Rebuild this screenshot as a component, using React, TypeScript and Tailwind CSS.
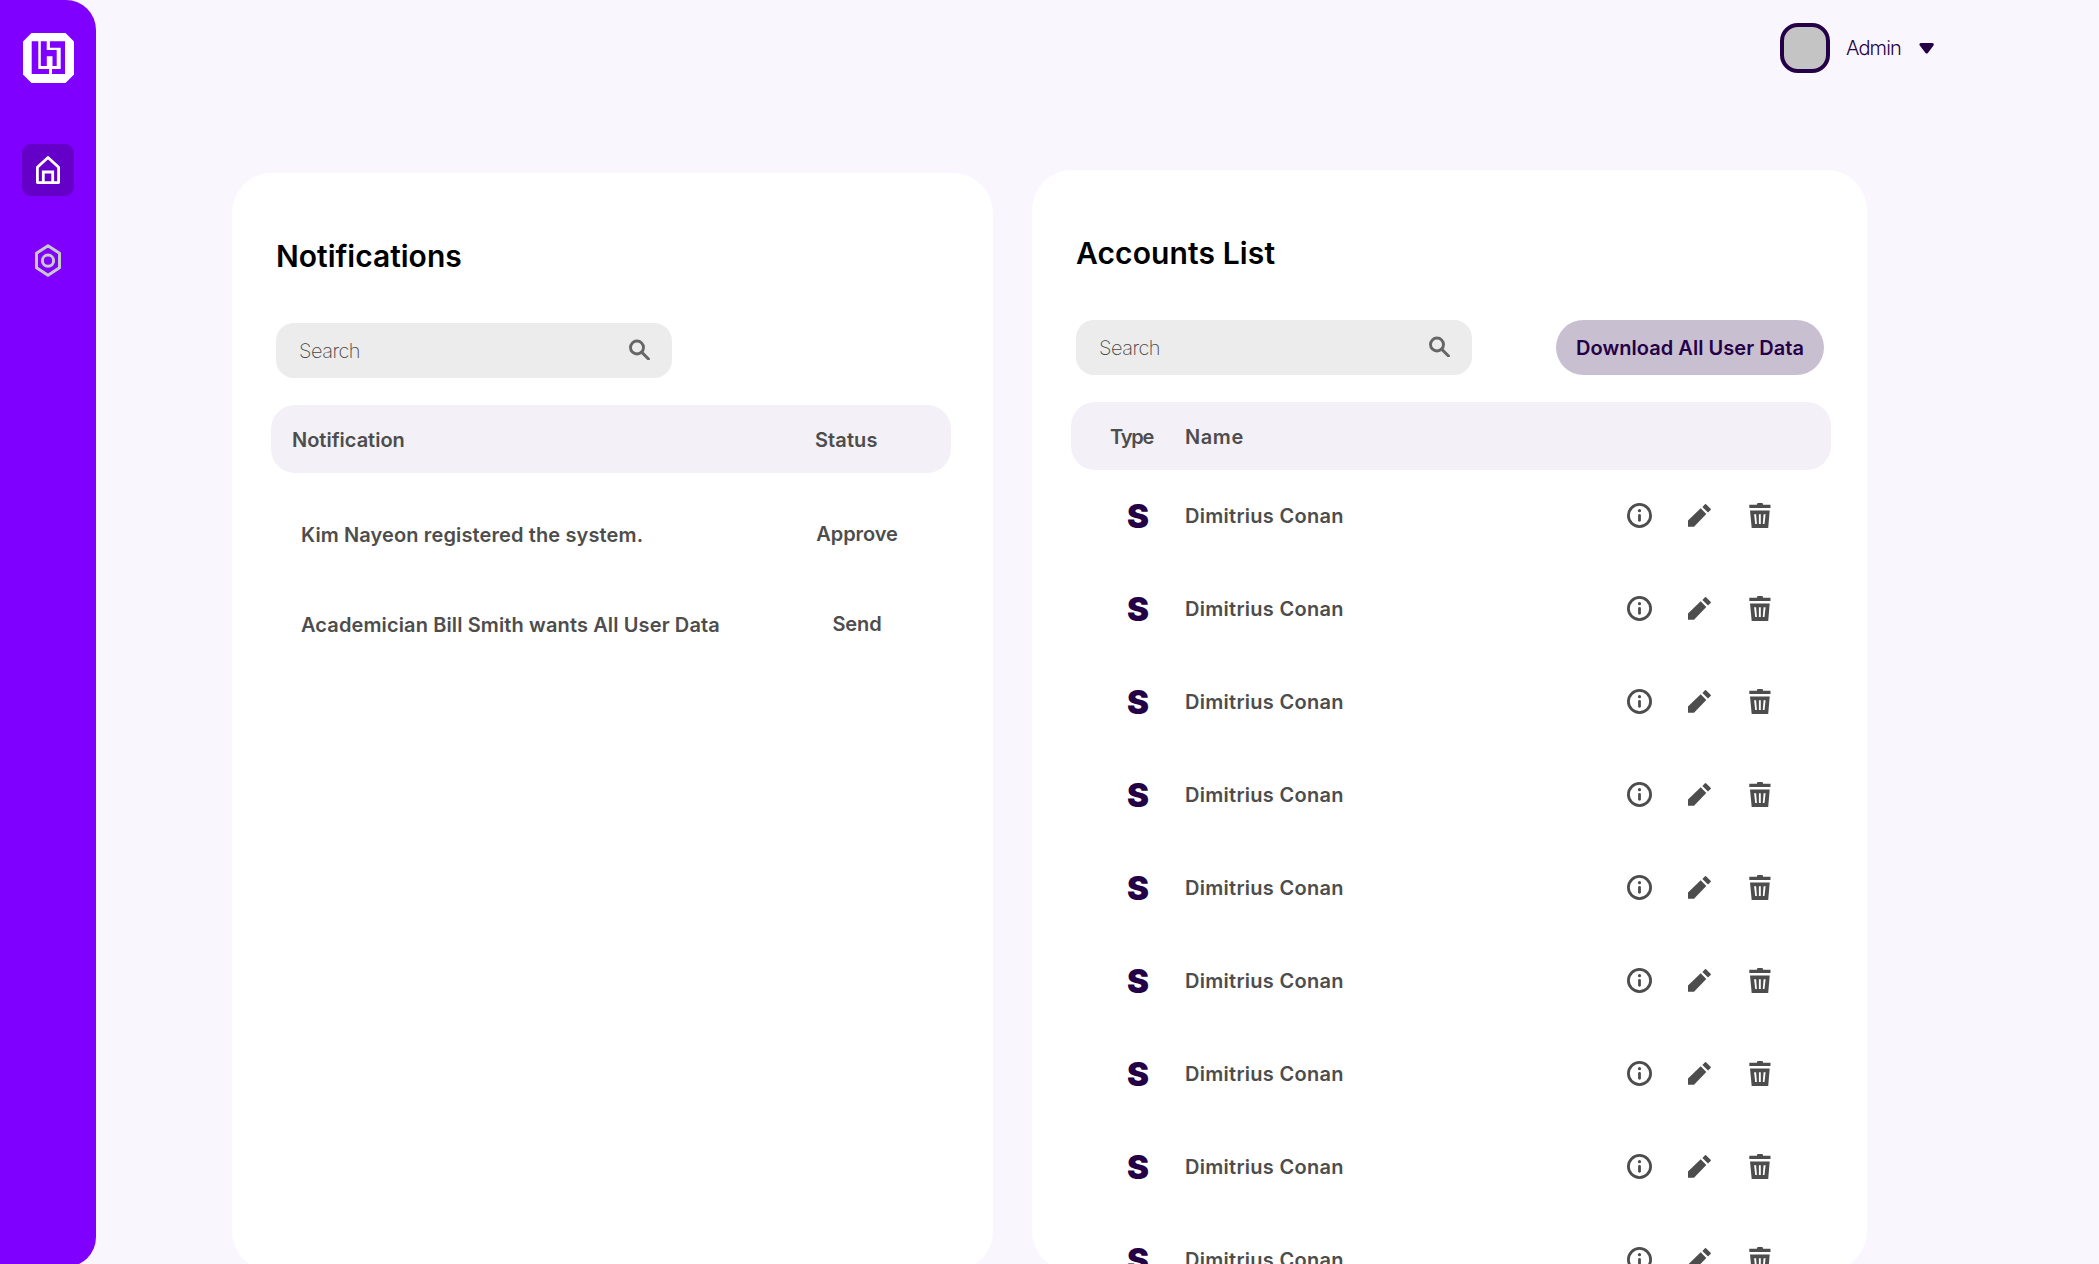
import React from 'react';

const notifications = [
  { text: 'Kim Nayeon registered the system.', action: 'Approve' },
  { text: 'Academician Bill Smith wants All User Data', action: 'Send' },
];

const accounts = Array.from({ length: 9 }, (_, id) => ({ id, type: 'S', name: 'Dimitrius Conan' }));

function Logo() {
  return (
    <svg className="h-[50px] w-[51px]" viewBox="0 0 51 50">
      <path fill="#fff" d="M8.5 0h34L51 8.500V41.500L42.500 50h-34L0 41.500v-33Z" />
      <path
        fill="#8000ff"
        d="M8.700 8.300h6.600V36H26v5H8.700ZM17.800 8.300h5.900V17h10v15.900h-4.200V23.200h-5.700v9.700h-6ZM26.900 8.300H42V41H29v-5h8.700V14.700H26.900Z"
      />
    </svg>
  );
}

function HomeIcon() {
  return (
    <svg className="h-7 w-6" viewBox="0 0 24 28" fill="none" stroke="#fff" strokeWidth="2.800" strokeLinejoin="round">
      <path d="M1.400 11.300 12 1.500l10.600 9.800v15.300H1.400Z" />
      <path d="M7.300 26.500V16h9.400v10.500" strokeLinejoin="miter" />
    </svg>
  );
}

function HexIcon() {
  return (
    <svg className="h-[33px] w-[26px]" viewBox="0 0 26 33" fill="none" stroke="#c8c8c8" strokeWidth="3" strokeLinejoin="round">
      <path d="M13 1.700 24.500 9.300v14.400L13 31.300 1.500 23.700V9.300Z" />
      <circle cx="13" cy="16.700" r="5.600" />
    </svg>
  );
}

function SearchIcon() {
  return (
    <svg className="h-[21px] w-[21px] -translate-y-px" viewBox="0 0 21 21" fill="none" stroke="#666" strokeWidth="2.900">
      <circle cx="8" cy="8.500" r="6.500" />
      <path d="m12.600 13.100 6.900 6.900" strokeLinecap="round" />
    </svg>
  );
}

function InfoIcon() {
  return (
    <svg className="h-[25px] w-[25px]" viewBox="0 0 25 25" fill="none" stroke="#4d4d4d">
      <circle cx="12.500" cy="12.500" r="11.100" strokeWidth="2.800" />
      <path d="M12.500 12.300v5" strokeWidth="2.800" strokeLinecap="round" />
      <circle cx="12.500" cy="7.700" r="1.600" fill="#4d4d4d" stroke="none" />
    </svg>
  );
}

function PencilIcon() {
  return (
    <svg className="h-[23px] w-[23px]" viewBox="0 0 23 23" fill="#4d4d4d">
      <path d="M0 16.600 12.700 4.300l5.600 5.600L6 22.700H0Z" />
      <path d="M14.400 3 17 .3q.7-.5 1.300.1l4.300 4.300q.6.700 0 1.300L20 8.600Z" />
    </svg>
  );
}

function TrashIcon() {
  return (
    <svg className="h-[25px] w-[22px]" viewBox="0 0 22 25" fill="#4d4d4d">
      <path d="M.3 1.700h7.500L8.500.1h5l.7 1.600h7.300v3.300H.3Z" />
      <path
        fillRule="evenodd"
        d="M1 7.600h19.700L19.200 25H2.700ZM5.100 11.300l1.100 9.600h1.700l-.8-9.600ZM9.900 11.300v9.600h1.900v-9.600ZM14.600 11.300l-.8 9.600h1.700l1.100-9.600Z"
      />
    </svg>
  );
}

function SearchBox() {
  return (
    <div className="flex h-[55px] w-[396px] items-center justify-between rounded-[18px] bg-[#ececec] pr-[22px] pl-[23px]">
      <span className="text-[20px] leading-[30px] font-extralight tracking-[-0.5px] text-[#444]">Search</span>
      <SearchIcon />
    </div>
  );
}

function Notifications() {
  return (
    <section className="mt-[3px] h-[1098px] w-[761px] rounded-[40px] bg-white pt-[63px]">
      <h2 className="ml-[44px] text-[30px] leading-10 font-semibold text-black">Notifications</h2>
      <div className="mt-[47px] ml-[44px]">
        <SearchBox />
      </div>
      <div className="mt-[27px] ml-[39px] flex h-[68px] w-[680px] items-center rounded-[24px] bg-[#f3f1f7] pt-[2px]">
        <span className="ml-[21px] w-[523px]">Notification</span>
        <span className="tracking-[0.1px]">Status</span>
      </div>
      <div className="mt-[47px] ml-[69px] flex flex-col gap-[60px]">
        {notifications.map((n) => (
          <div key={n.action} className="flex h-[30px] items-center">
            <span className="w-[500px] tracking-[0.12px]">{n.text}</span>
            <span className="-mt-[2px] w-[112px] text-center tracking-[-0.1px]">{n.action}</span>
          </div>
        ))}
      </div>
    </section>
  );
}

function AccountsList() {
  return (
    <section className="h-[1101px] w-[835px] rounded-[40px] bg-white pt-[63px]">
      <h2 className="ml-[44px] text-[30px] leading-10 font-semibold tracking-[0.12px] text-black">Accounts List</h2>
      <div className="mt-[47px] mr-[43px] ml-[44px] flex justify-between">
        <SearchBox />
        <button className="h-[55px] w-[268px] rounded-full bg-[#c8bfd0] font-semibold tracking-[0.04px] text-[#240046]">
          Download All User Data
        </button>
      </div>
      <div className="mt-[27px] ml-[39px] flex h-[68px] w-[760px] items-center rounded-[24px] bg-[#f3f1f7] pt-[2px]">
        <span className="ml-[39px] w-[75px] tracking-[-1.2px]">Type</span>
        <span className="tracking-[0.6px]">Name</span>
      </div>
      <div className="mt-[30px] ml-[95px] flex flex-col gap-[62px]">
        {accounts.map((a) => (
          <div key={a.id} className="flex h-[31px] items-center">
            <span className="w-[58px] text-[33px] font-black text-[#240046]">{a.type}</span>
            <span className="w-[442px] tracking-[0.28px]">{a.name}</span>
            <InfoIcon />
            <span className="ml-9">
              <PencilIcon />
            </span>
            <span className="ml-[38px]">
              <TrashIcon />
            </span>
          </div>
        ))}
      </div>
    </section>
  );
}

export default function App() {
  return (
    <div className="flex h-[1264px] w-full overflow-hidden bg-[#f9f7fd] font-['Inter',sans-serif] text-[20px] leading-[30px] font-semibold text-[#4d4d4d]">
      <aside className="flex h-[1267px] w-24 shrink-0 flex-col items-center rounded-r-[30px] bg-[#8000ff] pt-[33px]">
        <Logo />
        <div className="mt-[61px] flex h-[52px] w-[52px] items-center justify-center rounded-[9px] bg-[#6400c8]">
          <HomeIcon />
        </div>
        <div className="mt-12">
          <HexIcon />
        </div>
      </aside>
      <main className="flex-1">
        <header className="flex h-[170px] items-start justify-end pt-[23px] pr-[164px]">
          <div className="flex h-[50px] items-center">
            <div className="h-[50px] w-[50px] rounded-[18px] border-4 border-[#240046] bg-[#c4c4c4]" />
            <span className="ml-4 w-[73px] font-light tracking-[-0.9px] text-[#240046]">Admin</span>
            <svg className="h-[12px] w-4" viewBox="0 0 16 12" fill="#240046" stroke="#240046" strokeWidth="3" strokeLinejoin="round">
              <path d="M2 2.500h11.300L7.700 10Z" />
            </svg>
          </div>
        </header>
        <div className="ml-[136px] flex items-start gap-[39px]">
          <Notifications />
          <AccountsList />
        </div>
      </main>
    </div>
  );
}
